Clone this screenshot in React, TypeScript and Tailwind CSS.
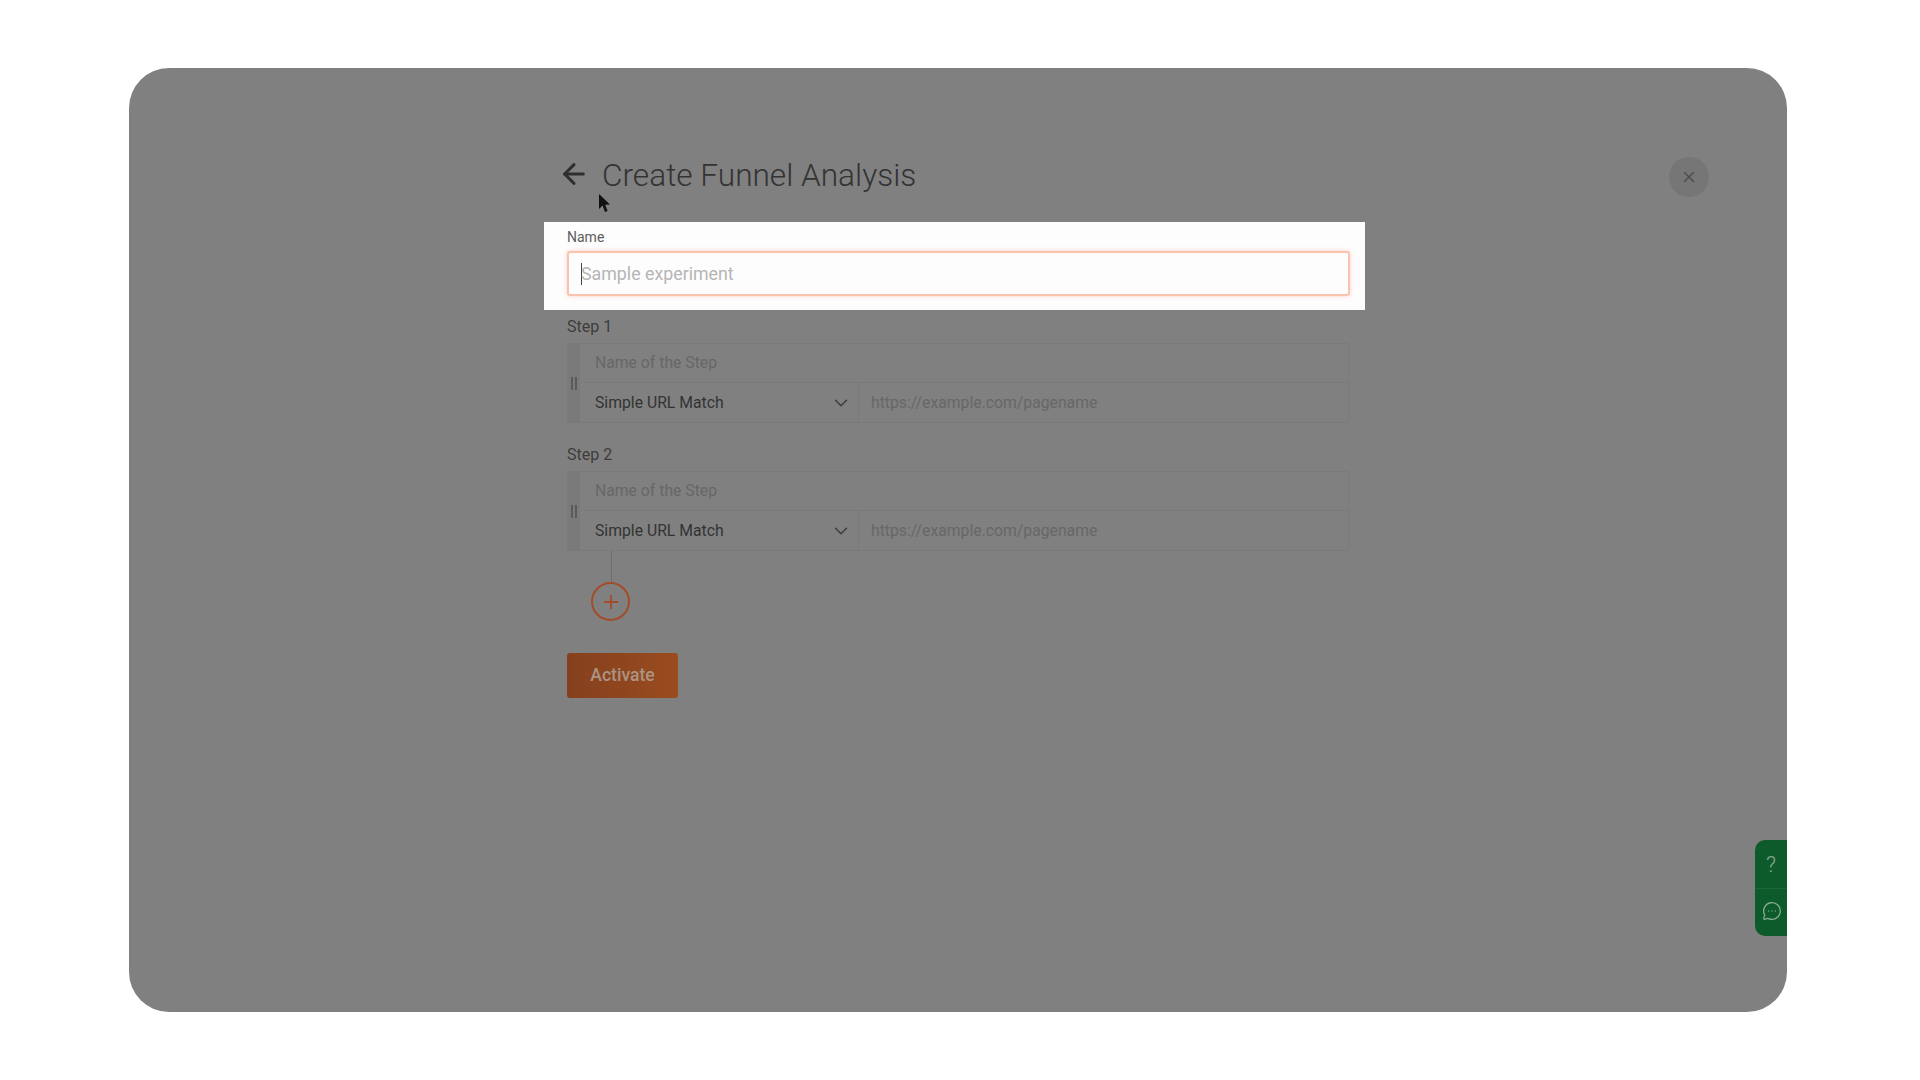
import React from "react";
import { ArrowLeft, ChevronDown, MessageCircleMore, Plus, X } from "lucide-react";

function Step({ label }: { label: string }) {
  return (
    <div className="mt-[22px] first:mt-0">
      <div className="h-[20px] text-[16px] leading-[20px] text-[#3d3d3d]">{label}</div>
      <div className="mt-[6px] flex h-[80px] rounded-[2px] border border-[#7a7a7a]">
        {/* Drag handle */}
        <div className="flex w-[12px] items-center justify-center gap-[2px] bg-[#7a7a7a]">
          <span className="h-[13px] w-[2px] bg-[#5a5a5a]" />
          <span className="h-[13px] w-[2px] bg-[#5a5a5a]" />
        </div>
        <div className="flex flex-1 flex-col">
          <div className="flex h-[38px] items-center pl-[15px] text-[15.75px] text-[#676767]">
            Name of the Step
          </div>
          <div className="ml-[4px] h-px bg-[#7a7a7a]" />
          <div className="flex flex-1">
            <div className="flex w-[279px] items-center justify-between border-r border-[#7a7a7a] pl-[15px] pr-[6px] text-[15.75px] text-[#333333]">
              <span>Simple URL Match</span>
              <ChevronDown className="h-[22px] w-[22px] text-[#3d3d3d]" strokeWidth={1.6} />
            </div>
            <div className="flex flex-1 items-center pl-[12px] text-[15.75px] text-[#676767]">
              https://example.com/pagename
            </div>
          </div>
        </div>
      </div>
    </div>
  );
}

export default function App() {
  return (
    <div className="h-screen w-full bg-white pb-[68px] pl-[129px] pr-[133px] pt-[68px] font-['Roboto',sans-serif]">
      <div className="relative h-full rounded-[40px] bg-[#808080] pl-[438px] pt-[84px]">
        {/* Close */}
        <button className="absolute right-[78px] top-[89px] flex h-[40px] w-[40px] items-center justify-center rounded-full bg-[#767676] text-[#4d4d4d]">
          <X className="h-[18px] w-[18px]" strokeWidth={2} />
        </button>

        {/* Pointer */}
        <svg className="absolute left-[469px] top-[125px] h-[22px] w-[14px]" viewBox="0 0 14 22">
          <path d="M1 1 L1 16 L4.6 12.6 L7 19 L9.6 18 L7.2 11.8 L12 11.6 Z" fill="#111111" />
        </svg>

        <div className="flex h-[70px] items-start">
          <div className="-ml-[9px] flex h-[48px] items-center">
            <ArrowLeft className="mb-[4px] h-[32px] w-[32px] text-[#2e2e2e]" strokeWidth={2.25} />
            <h1 className="ml-[12px] text-[31.6px] font-light leading-[48px] text-[#333333]">Create Funnel Analysis</h1>
          </div>
        </div>

        {/* Highlighted name field */}
        <div className="-ml-[23px] h-[88px] w-[821px] bg-[#fefdfe] pl-[23px] pr-[15px] pt-[5px]">
          <div className="h-[24px] text-[14px] leading-[20px] text-[#5c5c5c]">Name</div>
          <div className="flex h-[45px] items-center rounded-[3px] border-2 border-[#f9c3b0] bg-[#fefdfe] pl-[12px] pt-[1px] text-[17.8px] text-[#b5b5b5] shadow-[0_0_4px_rgba(248,170,140,0.5)]">
            <span className="-mr-px h-[22px] w-px bg-[#444444]" />
            Sample experiment
          </div>
        </div>

        {/* Steps */}
        <div className="mt-[7px] w-[782px]">
          <Step label="Step 1" />
          <Step label="Step 2" />
          <div className="ml-[44px] h-[31px] w-px bg-[#6e6e6e]" />
          <div className="ml-[24px] flex h-[39px] w-[39px] items-center justify-center rounded-full border-2 border-[#a24d28] text-[#a24d28]">
            <Plus className="h-[22px] w-[22px]" strokeWidth={2} />
          </div>
          <button className="mt-[32px] flex h-[45px] w-[111px] items-center justify-center rounded-[3px] bg-gradient-to-r from-[#84401e] to-[#9a4c1e] text-[17.6px] font-medium text-[#ac9383]">
            Activate
          </button>
        </div>

        {/* Help widget */}
        <div className="absolute bottom-[76px] right-0 flex h-[96px] w-[32px] flex-col rounded-l-[10px] bg-[#0d5a2b] text-[#86a890]">
          <div className="flex flex-1 items-center justify-center border-b border-[#1a6838] pt-[2px]">
            <span className="text-[22px] font-light leading-none">?</span>
          </div>
          <div className="flex flex-1 items-center justify-center pb-[2px] pl-[1px]">
            <MessageCircleMore className="h-[20px] w-[20px]" strokeWidth={1.6} />
          </div>
        </div>
      </div>
    </div>
  );
}
